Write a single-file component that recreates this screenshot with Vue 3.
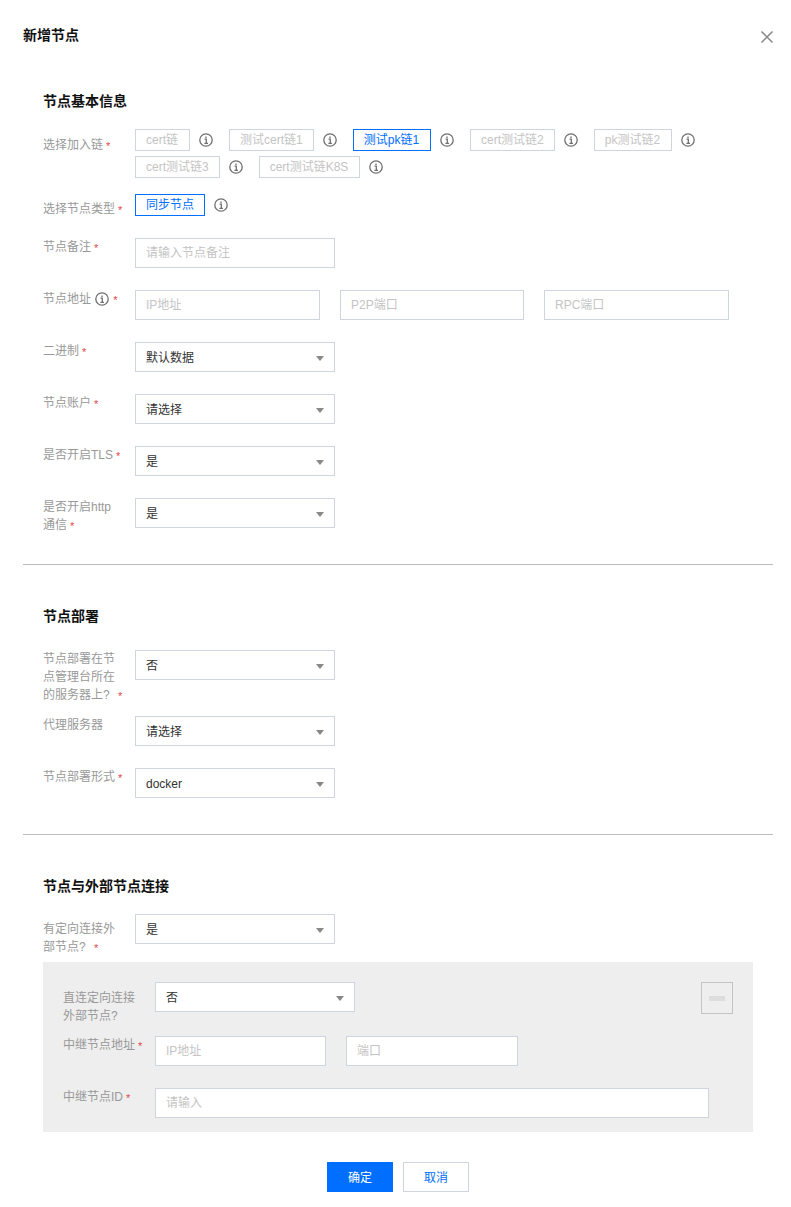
<script setup>
const chains = [
  { text: 'cert链', wide: true },
  { text: '测试cert链1' },
  { text: '测试pk链1', active: true, wide: true },
  { text: 'cert测试链2' },
  { text: 'pk测试链2', wide: true },
  { text: 'cert测试链3' },
  { text: 'cert测试链K8S', wide: true },
]
</script>

<template>
  <div class="modal">
    <header class="head">
      <h1 class="title">新增节点</h1>
      <svg class="close" width="14" height="14" viewBox="0 0 14 14" aria-hidden="true">
        <path d="M1.5 1.5l11 11M12.5 1.5l-11 11" stroke="#888" stroke-width="1.5" fill="none" />
      </svg>
    </header>

    <section class="section first">
      <h2 class="sec-title">节点基本信息</h2>

      <div class="row tags-row">
        <div class="label chain-label">选择加入链<i class="star">*</i></div>
        <div class="tags">
          <span v-for="c in chains" :key="c.text" class="tag-item">
            <span class="tag" :class="{ active: c.active, wide: c.wide }">{{ c.text }}</span>
            <svg class="info" viewBox="0 0 14 14" aria-hidden="true">
              <circle cx="7" cy="7" r="6.2" />
              <path d="M5.6 6.1H7.3V10.3M5.4 10.4H9M7 3.4v1.5" />
            </svg>
          </span>
        </div>
      </div>

      <div class="row type-row">
        <div class="label tag-label">选择节点类型<i class="star">*</i></div>
        <div class="tags">
          <span class="tag-item">
            <span class="tag active">同步节点</span>
            <svg class="info" viewBox="0 0 14 14" aria-hidden="true">
              <circle cx="7" cy="7" r="6.2" />
              <path d="M5.6 6.1H7.3V10.3M5.4 10.4H9M7 3.4v1.5" />
            </svg>
          </span>
        </div>
      </div>

      <div class="row">
        <div class="label">节点备注<i class="star">*</i></div>
        <input class="input w200" placeholder="请输入节点备注" />
      </div>

      <div class="row">
        <div class="label">节点地址
          <svg class="info inline" viewBox="0 0 14 14" aria-hidden="true">
            <circle cx="7" cy="7" r="6.2" />
            <path d="M5.6 6.1H7.3V10.3M5.4 10.4H9M7 3.4v1.5" />
          </svg><i class="star">*</i>
        </div>
        <div class="inputs">
          <input class="input w185" placeholder="IP地址" />
          <input class="input w184" placeholder="P2P端口" />
          <input class="input w185" placeholder="RPC端口" />
        </div>
      </div>

      <div class="row">
        <div class="label">二进制<i class="star">*</i></div>
        <div class="select"><span>默认数据</span><b class="arrow"></b></div>
      </div>
      <div class="row">
        <div class="label">节点账户<i class="star">*</i></div>
        <div class="select"><span>请选择</span><b class="arrow"></b></div>
      </div>
      <div class="row">
        <div class="label">是否开启TLS<i class="star">*</i></div>
        <div class="select"><span>是</span><b class="arrow"></b></div>
      </div>
      <div class="row last">
        <div class="label">是否开启http 通信<i class="star">*</i></div>
        <div class="select"><span>是</span><b class="arrow"></b></div>
      </div>
    </section>

    <section class="section">
      <h2 class="sec-title roomy">节点部署</h2>
      <div class="row three-lines">
        <div class="label">节点部署在节点管理台所在的服务器上? <i class="star after-q">*</i></div>
        <div class="select"><span>否</span><b class="arrow"></b></div>
      </div>
      <div class="row">
        <div class="label">代理服务器</div>
        <div class="select"><span>请选择</span><b class="arrow"></b></div>
      </div>
      <div class="row last">
        <div class="label">节点部署形式<i class="star">*</i></div>
        <div class="select"><span>docker</span><b class="arrow"></b></div>
      </div>
    </section>

    <section class="section plain">
      <h2 class="sec-title">节点与外部节点连接</h2>
      <div class="row before-panel">
        <div class="label tag-label">有定向连接外部节点? <i class="star after-q">*</i></div>
        <div class="select"><span>是</span><b class="arrow"></b></div>
      </div>

      <div class="panel">
        <div class="row direct">
          <div class="label chain-label">直连定向连接外部节点?</div>
          <div class="select"><span>否</span><b class="arrow"></b></div>
          <div class="minus"><b></b></div>
        </div>
        <div class="row">
          <div class="label">中继节点地址<i class="star">*</i></div>
          <div class="inputs">
            <input class="input w171" placeholder="IP地址" />
            <input class="input w172" placeholder="端口" />
          </div>
        </div>
        <div class="row last">
          <div class="label">中继节点ID<i class="star">*</i></div>
          <input class="input w554" placeholder="请输入" />
        </div>
      </div>
    </section>

    <footer class="foot">
      <button class="btn primary" type="button">确定</button>
      <button class="btn" type="button">取消</button>
    </footer>
  </div>
</template>

<style>
html, body { margin: 0; background: #fff; }
</style>

<style scoped>
.modal {
  width: 791px;
  height: 1207px;
  box-sizing: border-box;
  padding: 25px 18px 15px 23px;
  font-family: "Liberation Sans", "Noto Sans CJK SC", sans-serif;
  font-size: 12px;
  line-height: 18px;
  color: #333;
  overflow: hidden;
}
.head {
  display: flex;
  justify-content: space-between;
  align-items: flex-start;
  height: 20px;
  margin-bottom: 46px;
}
.title, .sec-title {
  margin: 0;
  font-size: 14px;
  line-height: 20px;
  font-weight: 700;
  color: #111;
}
.close { margin: 5px -1px 0 0; }
.section {
  padding: 0 20px 36px;
  border-bottom: 1px solid #bbb;
  margin-bottom: 41px;
}
.section.first { padding-bottom: 30px; }
.section.plain { padding: 0 20px; border-bottom: 0; margin-bottom: 0; }
.sec-title { margin-bottom: 18px; }
.sec-title.roomy { margin-bottom: 24px; }
.row {
  display: flex;
  align-items: flex-start;
  margin-bottom: 22px;
}
.row.last { margin-bottom: 0; }
.row.tags-row { margin-bottom: 16px; }
.row.type-row { margin-bottom: 20px; }
.row.three-lines { margin-bottom: 12px; }
.row.before-panel { margin-bottom: 6px; }
.row.direct { margin-bottom: 11px; }
.label {
  width: 80px;
  margin: 0 12px 0 0;
  color: #999;
  flex: none;
}
.label.tag-label { margin-top: 6px; }
.label.chain-label { margin-top: 7px; }
.star {
  position: relative;
  top: 1px;
  font-style: normal;
  color: #e54545;
  margin-left: 3px;
  font-size: 11px;
}
.star.after-q { margin-left: 5px; }
.tags {
  display: flex;
  flex-wrap: wrap;
  row-gap: 5px;
  width: 600px;
}
.tag-item {
  display: inline-flex;
  align-items: center;
  height: 22px;
  margin-right: 16px;
}
.tag {
  box-sizing: border-box;
  height: 22px;
  padding: 0 10px;
  border: 1px solid #cfd5de;
  line-height: 21px;
  color: #c4c4c4;
  white-space: nowrap;
}
.tag.wide { padding-right: 11px; }
.tag.active {
  border-color: #006eff;
  color: #006eff;
}
.info {
  width: 14px;
  height: 14px;
  margin-left: 9px;
  fill: none;
  stroke: #6f6f6f;
  stroke-width: 1.3;
  flex: none;
}
.info.inline {
  display: inline-block;
  vertical-align: -3px;
  margin-left: 1px;
  margin-right: 1px;
}
.inputs { display: flex; gap: 20px; }
.input {
  box-sizing: border-box;
  height: 30px;
  padding: 0 10px;
  margin: 0;
  border: 1px solid #cfd5de;
  border-radius: 0;
  outline: 0;
  background: #fff;
  font: inherit;
  color: #333;
  flex: none;
}
.input::placeholder { color: #c4c4c4; opacity: 1; }
.w200 { width: 200px; }
.w185 { width: 185px; }
.w184 { width: 184px; }
.w171 { width: 171px; }
.w172 { width: 172px; }
.w554 { width: 554px; }
.select {
  box-sizing: border-box;
  width: 200px;
  height: 30px;
  padding: 2px 10px 0;
  border: 1px solid #cfd5de;
  background: #fff;
  display: flex;
  align-items: center;
  justify-content: space-between;
  color: #333;
  flex: none;
}
.arrow {
  width: 0;
  height: 0;
  border-left: 4px solid transparent;
  border-right: 4px solid transparent;
  border-top: 5px solid #888;
}
.panel {
  background: #eee;
  padding: 20px 20px 14px;
}
.minus {
  box-sizing: border-box;
  width: 32px;
  height: 32px;
  margin-left: auto;
  border: 1px solid #c4c4c4;
  display: flex;
  align-items: center;
  justify-content: center;
}
.minus b {
  width: 16px;
  height: 5px;
  background: #ddd;
}
.foot {
  display: flex;
  justify-content: center;
  gap: 10px;
  margin-top: 30px;
  width: 750px;
}
.btn {
  box-sizing: border-box;
  width: 66px;
  height: 30px;
  padding: 2px 0 0;
  border: 1px solid #cfd5de;
  border-radius: 0;
  background: #fff;
  color: #006eff;
  font: inherit;
}
.btn.primary {
  background: #006eff;
  border-color: #006eff;
  color: #fff;
}
</style>
